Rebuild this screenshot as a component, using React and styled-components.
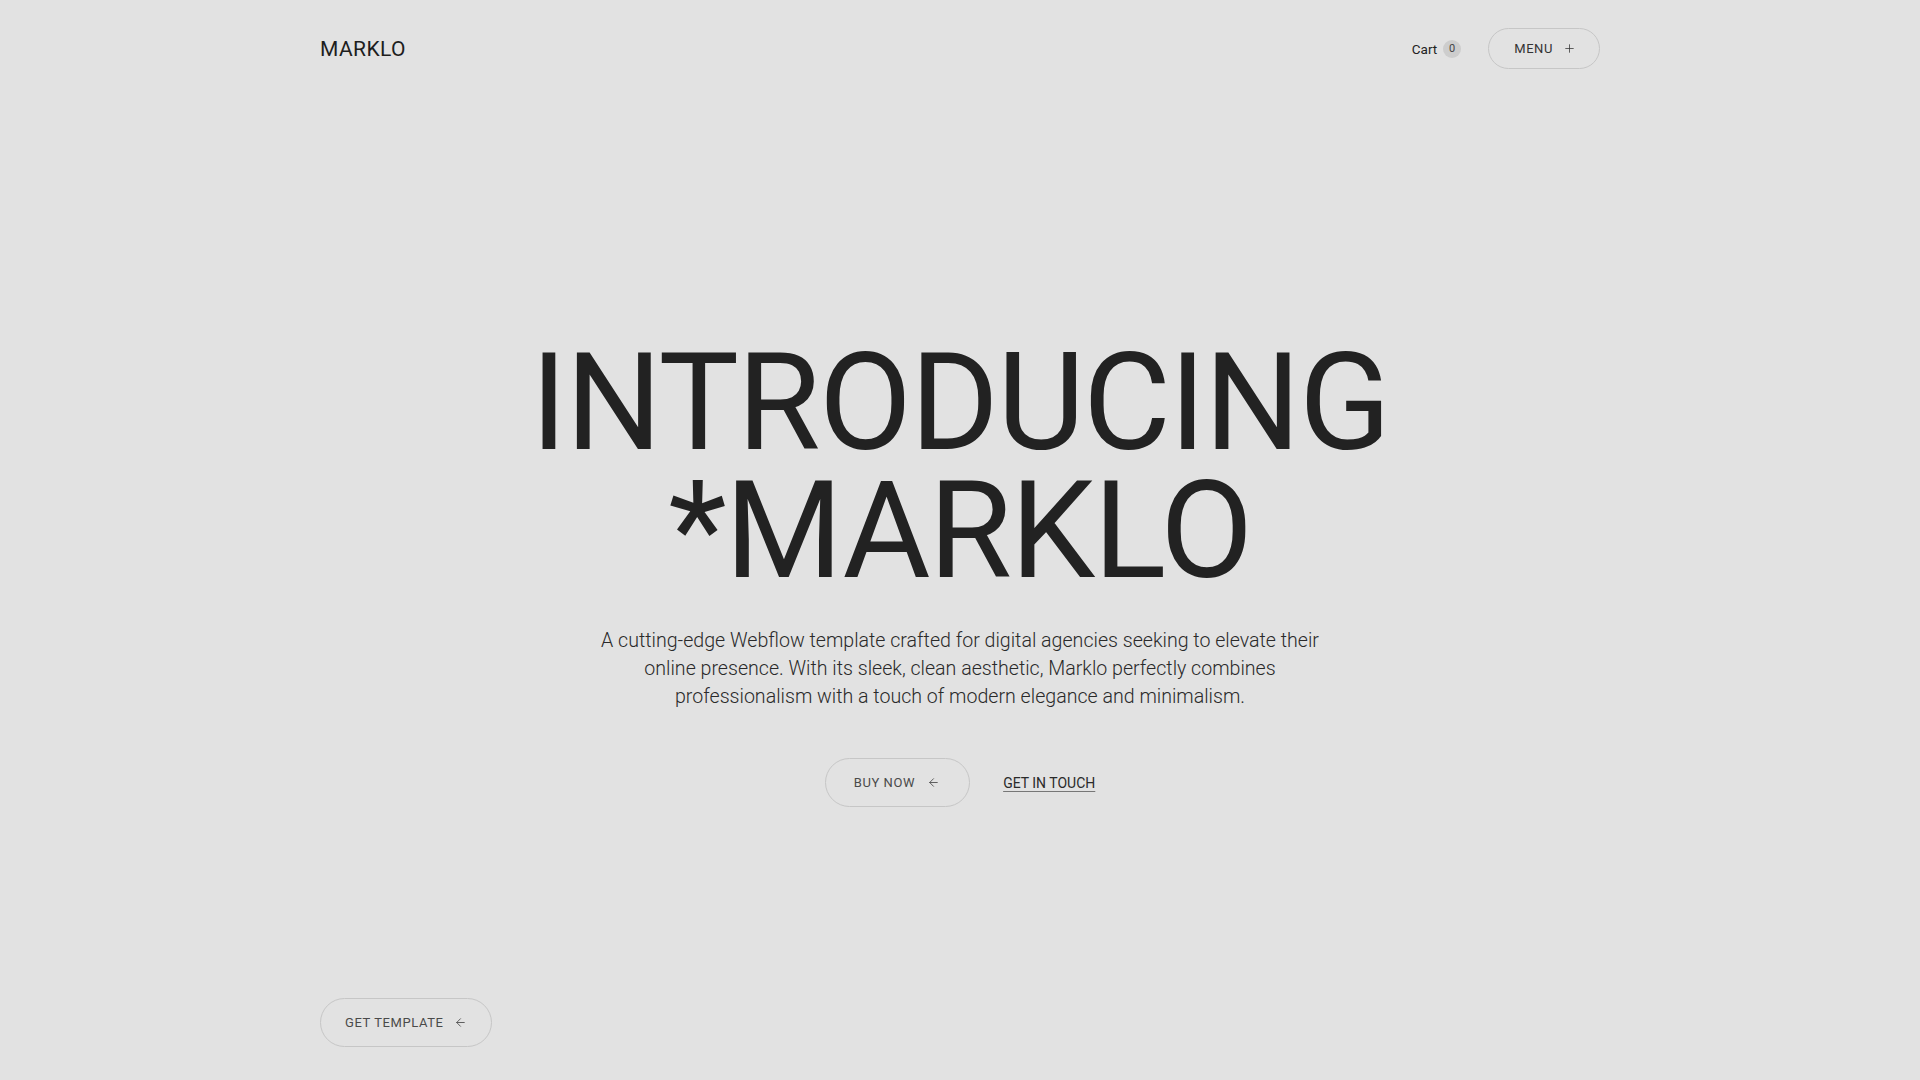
import React from "react";
import styled, { createGlobalStyle } from "styled-components";
import { ArrowLeft, Plus } from "lucide-react";

const GlobalStyle = createGlobalStyle`
  html, body {
    margin: 0;
    padding: 0;
    background: #e2e2e2;
  }
  body {
    font-family: Roboto, "Liberation Sans", Arial, sans-serif;
    color: #222222;
    -webkit-font-smoothing: antialiased;
  }
  * {
    box-sizing: border-box;
  }
`;

const Page = styled.div`
  min-height: 100vh;
  display: flex;
  flex-direction: column;
  width: 1280px;
  margin: 0 auto;
`;

const Header = styled.header`
  display: flex;
  align-items: center;
  justify-content: space-between;
  padding-top: 28px;
`;

const Logo = styled.a`
  font-size: 21px;
  font-weight: 400;
  letter-spacing: 0.02em;
  color: #1e1e1e;
  text-decoration: none;
`;

const Nav = styled.div`
  display: flex;
  align-items: center;
  gap: 27px;
`;

const Cart = styled.div`
  display: flex;
  align-items: center;
  gap: 6px;
  font-size: 13.5px;
  color: #222;
`;

const Badge = styled.span`
  width: 18px;
  height: 18px;
  border-radius: 50%;
  background: #cdcdcd;
  display: flex;
  align-items: center;
  justify-content: center;
  font-size: 11px;
  color: #444;
`;

const PillButton = styled.button`
  display: inline-flex;
  align-items: center;
  gap: ${(p) => p.gap || 12}px;
  height: ${(p) => p.h || 49}px;
  padding: 0 ${(p) => p.pr || 28}px 0 ${(p) => p.pl || 28}px;
  border: 1px solid #c6c6c6;
  border-radius: 999px;
  background: transparent;
  font-family: inherit;
  font-size: 13px;
  letter-spacing: 0.045em;
  text-transform: uppercase;
  color: ${(p) => p.color || "#4a4a4a"};
  cursor: pointer;

  svg {
    flex-shrink: 0;
  }
`;

const Main = styled.main`
  flex: 1;
  display: flex;
  flex-direction: column;
  align-items: center;
  padding-top: 270px;
`;

const Title = styled.h1`
  margin: 0;
  font-size: 135px;
  line-height: 128px;
  font-weight: 400;
  letter-spacing: -0.012em;
  text-align: center;
  color: #222222;
`;

const Lead = styled.p`
  margin: 32px 0 0;
  width: 760px;
  font-size: 19.6px;
  line-height: 28px;
  font-weight: 300;
  text-align: center;
  color: #2a2a2a;
`;

const Actions = styled.div`
  display: flex;
  align-items: center;
  gap: 33px;
  margin-top: 47px;
`;

const TextLink = styled.a`
  font-size: 14px;
  color: #2a2a2a;
  text-decoration: underline;
  text-decoration-color: #777;
  text-underline-offset: 3px;
  text-decoration-thickness: 1px;
`;

const Footer = styled.footer`
  padding-bottom: 33px;
`;

export default function App() {
  return (
    <>
      <GlobalStyle />
      <Page>
        <Header>
          <Logo href="#">MARKLO</Logo>
          <Nav>
            <Cart>
              Cart <Badge>0</Badge>
            </Cart>
            <PillButton h={41} pl={25} pr={23} gap={10} color="#333">
              Menu <Plus size={13} strokeWidth={1.4} />
            </PillButton>
          </Nav>
        </Header>
        <Main>
          <Title>
            INTRODUCING
            <br />
            *MARKLO
          </Title>
          <Lead>
            A cutting-edge Webflow template crafted for digital agencies seeking
            to elevate their online presence. With its sleek, clean aesthetic,
            Marklo perfectly combines professionalism with a touch of modern
            elegance and minimalism.
          </Lead>
          <Actions>
            <PillButton pl={28} pr={29} gap={12}>
              Buy now <ArrowLeft size={13} strokeWidth={1.6} />
            </PillButton>
            <TextLink href="#">GET IN TOUCH</TextLink>
          </Actions>
        </Main>
        <Footer>
          <PillButton pl={24} pr={24} gap={10}>
            Get template <ArrowLeft size={13} strokeWidth={1.6} />
          </PillButton>
        </Footer>
      </Page>
    </>
  );
}
